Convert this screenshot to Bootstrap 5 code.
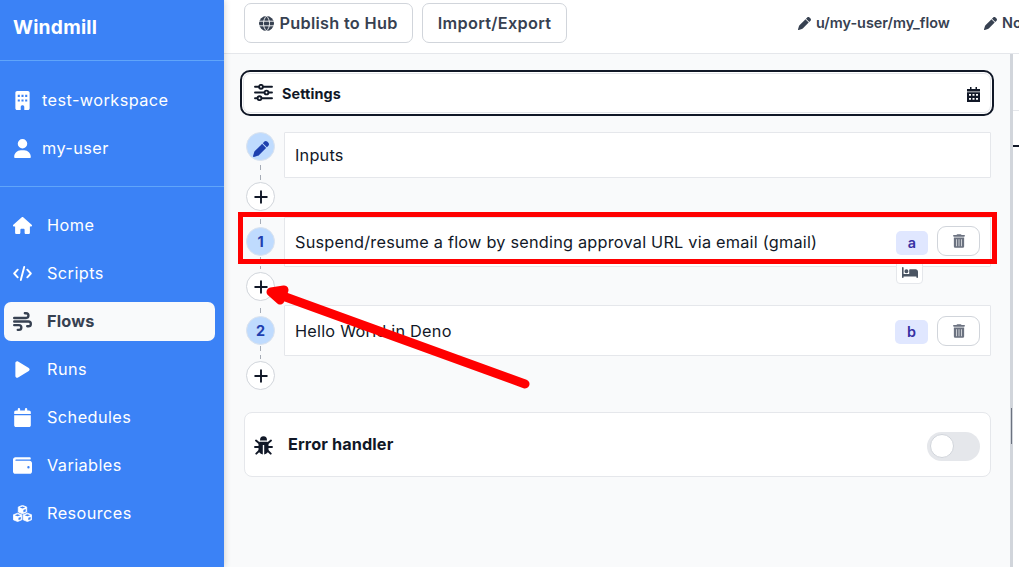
<!DOCTYPE html>
<html lang="en">
<head>
<meta charset="utf-8">
<meta name="viewport" content="width=device-width, initial-scale=1">
<title>Windmill</title>
<link href="https://cdn.jsdelivr.net/npm/bootstrap@5.3.0/dist/css/bootstrap.min.css" rel="stylesheet">
<style>
body{font-family:Inter,"Liberation Sans",sans-serif;font-optical-sizing:none;font-size:16.3px;letter-spacing:.22px;line-height:24px;color:#111827;background:#fff;height:567px;overflow:hidden}
svg{display:block;flex:none;fill:currentColor}
.side{width:224px;background:#3b82f6;color:#fff;letter-spacing:.42px;box-shadow:0 0 7px rgba(0,0,0,.2);z-index:2}
.brand{height:61px;padding:0 13px 7px;border-bottom:1px solid #60a5fa;font-size:19.2px;font-weight:700;letter-spacing:.25px}
.account{height:126px;padding:20px 13px 0;gap:9px;border-bottom:1px solid #60a5fa}
.account a{height:39px;gap:10px}
.menu{padding:19px 9px 0 4px;gap:9px}
.menu a{height:39px;padding-left:9px;gap:15px;border-radius:7px}
.side a>span:last-child{margin-bottom:1px}
.menu a.active{background:#f9fafb;color:#374151;font-weight:700;letter-spacing:.2px}
.side a{color:inherit;text-decoration:none}
.ico{width:19px}
.topbar{height:54px;border-bottom:1px solid #e5e7eb;background:#fff;padding:3px 0 0 20px}
.tool{height:40px;border:1px solid #d1d5db;border-radius:7px;background:#fff;color:#374151;font-weight:600;font-size:16.3px;letter-spacing:.3px;line-height:24px;padding:0;width:169px}
.tool+.tool{width:145px;margin-left:9px}
.path{font-size:14.4px;letter-spacing:0;font-weight:600;color:#374151;gap:5px;white-space:nowrap;padding-bottom:10px}
.editor{width:786px;background:#f9fafb;padding:16px 16px 0}
.ring{height:46px;border:2px solid #111827;border-radius:10px;padding:1px;background:#fff}
.ring>div{border:1px solid #e5e7eb;border-radius:7px;padding:0 10px 0 9px;font-size:14.4px;letter-spacing:.1px;font-weight:700}
.rail{width:29px}
.dot{width:29px;height:29px;border:1px solid #d1d5db;border-radius:50%;background:#fff;flex:none}
.dot.num{background:#bfdbfe;border-color:#dbe3ee;color:#1e40af;font-size:14.4px;letter-spacing:0;font-weight:700}
.rail line{stroke:#a6acb6;stroke-width:1}
.step{border:1px solid #e5e7eb;background:#fff;padding:0 10px;border-radius:1px}
.tagid{height:24px;border-radius:5px;background:#e0e7ff;color:#3730a3;font-size:14.4px;letter-spacing:0;font-weight:600}
.del{width:43px;height:30px;border:1px solid #d1d5db;border-radius:9px;background:#fff;color:#6b7280}
.bedtag{right:67px;top:41px;width:27px;height:25px;border:1px solid #e5e7eb;border-radius:4px;background:#fff;color:#4b5563}
.handler{height:65px;margin:22px 3px 0 4px;border:1px solid #e5e7eb;border-radius:8px;background:#fff;padding:0 10px 0 9px;font-weight:700}
.toggle{width:53px;height:29px;border-radius:15px;background:#e5e7eb;padding:2px 3px;margin-top:3px}
.toggle span{width:24px;height:24px;border-radius:50%;background:#fff;border:1px solid #d1d5db}
.split{width:3px;background:#d1d5db;padding:354px 1px 0}
.split div{width:1px;height:36px;background:#6b7280}
.mark-layer{left:0;top:0;z-index:5;pointer-events:none}
</style>
<script src="https://cdn.jsdelivr.net/npm/bootstrap@5.3.0/dist/js/bootstrap.bundle.min.js"></script>
</head>
<body class="d-flex position-relative">
<svg class="d-none">
<symbol id="pen" viewBox="0 0 512 512"><path d="M410 231l12-11-131-130-34 34L58.600 323c-10 10-18 23-22 37L1 481c-5 18 12 35 30 30l120-36c14-4 27-12 37-22zM314 68l130 130 49-49c25-25 25-65 0-90l-40-40c-25-25-65-25-90 0z"/></symbol>
<symbol id="bin" viewBox="0 0 448 512"><path fill-rule="evenodd" d="M135 18C141 7 152 0 164 0h120c12 0 23 7 29 18l7 14h96c18 0 32 14 32 32s-14 32-32 32H32C14 96 0 82 0 64s14-32 32-32h96zM32 128h384v320c0 35-29 64-64 64H96c-35 0-64-29-64-64zm88 64v256h24V192zm92 0v256h24V192zm92 0v256h24V192z"/></symbol>
<symbol id="plus" viewBox="0 0 14 14"><path d="M7 1.200V12.800M1.200 7H12.800" stroke="#111827" stroke-width="1.900" stroke-linecap="round"/></symbol>
</svg>
<nav class="side d-flex flex-column flex-shrink-0 position-relative">
  <div class="brand d-flex align-items-center">Windmill</div>
  <div class="account d-flex flex-column">
    <a href="#" class="d-flex align-items-center"><span class="ico d-flex justify-content-center"><svg width="15" height="19" viewBox="0 0 384 512"><path fill-rule="evenodd" d="M48 0C21 0 0 21 0 48v416c0 27 21 48 48 48h96v-80c0-64 96-64 96 0v80h96c27 0 48-21 48-48V48c0-27-21-48-48-48zM64 104h56v56H64zm100 0h56v56h-56zm100 0h56v56h-56zM64 228h56v56H64zm100 0h56v56h-56zm100 0h56v56h-56z"/></svg></span><span>test-workspace</span></a>
    <a href="#" class="d-flex align-items-center"><span class="ico d-flex justify-content-center"><svg width="17" height="19" viewBox="0 0 448 512"><path d="M224 256A128 128 0 1 0 224 0a128 128 0 1 0 0 256zm-46 48C80 304 0 384 0 482c0 17 13 30 30 30h388c17 0 30-13 30-30 0-98-80-178-178-178z"/></svg></span><span>my-user</span></a>
  </div>
  <div class="menu d-flex flex-column">
    <a href="#" class="d-flex align-items-center"><span class="ico"><svg width="19" height="17" viewBox="0 0 576 512"><path d="M576 255c0 18-15 33-32 33h-32v184c0 22-18 40-40 40h-80c-22 0-40-18-40-40v-88c0-18-14-32-32-32h-64c-18 0-32 14-32 32v88c0 22-18 40-40 40h-80c-22 0-40-18-40-40V288H32c-18 0-32-15-32-33 0-9 3-17 10-24L266 8c12-10 31-11 43-1l256 225c8 6 12 14 11 23z"/></svg></span><span>Home</span></a>
    <a href="#" class="d-flex align-items-center"><span class="ico"><svg width="19" height="15" viewBox="0 0 19 15"><path d="M4.700 3.700L1.200 7.500l3.500 3.800M14.300 3.700l3.500 3.800-3.500 3.800M11.200 1L7.800 14" fill="none" stroke="currentColor" stroke-width="1.900" stroke-linecap="round" stroke-linejoin="round"/></svg></span><span>Scripts</span></a>
    <a href="#" class="active d-flex align-items-center"><span class="ico"><svg width="19" height="19" viewBox="0 0 512 512"><path d="M288 32c0 18 14 32 32 32h32a32 32 0 0 1 0 64H32a32 32 0 0 0 0 64h320a96 96 0 0 0 0-192h-32c-18 0-32 14-32 32zm64 352c0 18 14 32 32 32h32a96 96 0 0 0 0-192H32a32 32 0 0 0 0 64h384a32 32 0 0 1 0 64h-32c-18 0-32 14-32 32zM128 512h32a96 96 0 0 0 0-192H32a32 32 0 0 0 0 64h128a32 32 0 0 1 0 64h-32a32 32 0 0 0 0 64z"/></svg></span><span>Flows</span></a>
    <a href="#" class="d-flex align-items-center"><span class="ico d-flex justify-content-center"><svg width="15" height="19" viewBox="0 0 384 512"><path d="M73 39C41 19 0 43 0 80v352c0 37 41 61 73 41l288-176c30-19 30-63 0-82z"/></svg></span><span>Runs</span></a>
    <a href="#" class="d-flex align-items-center"><span class="ico d-flex justify-content-center"><svg width="17" height="19" viewBox="0 0 448 512"><path d="M96 32v32H48C21 64 0 85 0 112v48h448v-48c0-27-21-48-48-48h-48V32a32 32 0 0 0-64 0v32H160V32a32 32 0 0 0-64 0zm352 160H0v272c0 27 21 48 48 48h352c27 0 48-21 48-48z"/></svg></span><span>Schedules</span></a>
    <a href="#" class="d-flex align-items-center"><span class="ico"><svg width="19" height="19" viewBox="0 0 512 512"><path fill-rule="evenodd" d="M64 32C29 32 0 61 0 96v320c0 35 29 64 64 64h384c35 0 64-29 64-64V192c0-35-29-64-64-64H80a16 16 0 0 1 0-32h368a32 32 0 0 0 0-64zM416 272a32 32 0 1 1 0 64 32 32 0 1 1 0-64z"/></svg></span><span>Variables</span></a>
    <a href="#" class="d-flex align-items-center"><span class="ico"><svg width="19" height="17" viewBox="0 0 19 17"><g id="cube"><path d="M9.500.4L13.700 2v5L9.500 8.700 5.300 7V2z" stroke="currentColor" stroke-width=".8" stroke-linejoin="round"/><path d="M6.700 2.500l2.800 1 2.800-1-2.800-1zM10.400 5v2.300l2.300-.9V4.100z" fill="#3b82f6"/></g><use href="#cube" x="-4.900" y="7.800"/><use href="#cube" x="4.900" y="7.800"/></svg></span><span>Resources</span></a>
  </div>
</nav>
<main class="d-flex flex-column flex-shrink-0" style="width:795px">
  <header class="topbar d-flex align-items-start overflow-hidden">
    <button class="tool d-flex align-items-center justify-content-center flex-shrink-0"><svg width="15" height="15" viewBox="0 0 15 15" style="margin-right:5px"><circle cx="7.500" cy="7.500" r="7.500"/><path d="M0 5.200h15M0 9.800h15M7.500 0C3.500 4 3.500 11 7.500 15M7.500 0c4 4 4 11 0 15" stroke="#fff" stroke-width=".9" fill="none"/></svg><span>Publish to Hub</span></button>
    <button class="tool flex-shrink-0">Import/Export</button>
    <div class="path d-flex align-items-center h-100" style="margin-left:231px"><svg width="13" height="13"><use href="#pen"/></svg><span style="width:163px">u/my-user/my_flow</span><svg width="13" height="13"><use href="#pen"/></svg><span>No</span></div>
  </header>
  <div class="d-flex flex-grow-1">
    <section class="editor">
      <div class="ring d-flex"><div class="d-flex align-items-center w-100"><svg width="19" height="17" viewBox="0 0 19 17" style="margin:0 9px 1px 1px"><g fill="none" stroke="currentColor" stroke-width="1.900" stroke-linecap="round"><path d="M1 2.800h3.500M9.500 2.800H18M1 8.500h9M15 8.500h3M1 14.200h2M8 14.200h10"/><circle cx="7" cy="2.800" r="1.900"/><circle cx="12.500" cy="8.500" r="1.900"/><circle cx="5.500" cy="14.200" r="1.900"/></g></svg><span style="margin-top:1px">Settings</span><svg class="ms-auto" width="13" height="15" viewBox="0 0 13 15" style="margin-top:2px"><path fill-rule="evenodd" d="M3 0h1.500v2h4V0H10v2h3v2.500H0V2h3zM0 5.200h13V15H0zM2 7v1.700h2V7zm3.500 0v1.700h2V7zM9 7v1.700h2V7zM2 11v1.700h2V11zm3.500 0v1.700h2V11zM9 11v1.700h2V11z"/></svg></div></div>
      <div class="d-flex mt-3 ms-1 ps-1">
        <div class="rail d-flex flex-column align-items-center" style="margin-left:-2px">
          <div class="dot num d-flex align-items-center justify-content-center"><svg width="16" height="16" style="margin-top:4px"><use href="#pen"/></svg></div>
          <svg width="1" height="21"><line x1=".5" x2=".5" y1="4" y2="9"/><line x1=".5" x2=".5" y1="14" y2="19"/></svg>
          <div class="dot d-flex align-items-center justify-content-center"><svg width="14" height="14"><use href="#plus"/></svg></div>
          <svg width="1" height="16"><line x1=".5" x2=".5" y1="8" y2="13"/></svg>
          <div class="dot num d-flex align-items-center justify-content-center">1</div>
          <svg width="1" height="16"><line x1=".5" x2=".5" y1="1" y2="5"/><line x1=".5" x2=".5" y1="10" y2="13"/></svg>
          <div class="dot d-flex align-items-center justify-content-center"><svg width="14" height="14"><use href="#plus"/></svg></div>
          <svg width="1" height="15"><line x1=".5" x2=".5" y1="7" y2="12"/></svg>
          <div class="dot num d-flex align-items-center justify-content-center">2</div>
          <svg width="1" height="16"><line x1=".5" x2=".5" y1="1" y2="6"/><line x1=".5" x2=".5" y1="10" y2="14"/></svg>
          <div class="dot d-flex align-items-center justify-content-center"><svg width="14" height="14"><use href="#plus"/></svg></div>
        </div>
        <div class="flex-grow-1 d-flex flex-column" style="margin:0 3px 0 9px">
          <div class="step d-flex align-items-center" style="height:46px">Inputs</div>
          <div class="step d-flex align-items-center position-relative" style="height:50px;margin-top:39px"><span>Suspend/resume a flow by sending approval URL via email (gmail)</span>
            <span class="tagid d-flex align-items-center justify-content-center ms-auto" style="width:32px;margin-top:2px">a</span><button class="del d-flex align-items-center justify-content-center" style="margin-left:9px;margin-bottom:2px"><svg width="12" height="14"><use href="#bin"/></svg></button>
            <span class="bedtag position-absolute d-flex align-items-center justify-content-center"><svg width="16" height="13" viewBox="0 32 640 448" style="margin-top:2px"><path d="M32 32c18 0 32 14 32 32v256h224V160c0-18 14-32 32-32h224c53 0 96 43 96 96v224a32 32 0 0 1-64 0v-32H64v32a32 32 0 0 1-64 0V64c0-18 14-32 32-32zm144 96a80 80 0 1 1 0 160 80 80 0 1 1 0-160z"/></svg></span></div>
          <div class="step d-flex align-items-center" style="height:51px;margin-top:38px">Hello World in Deno
            <span class="tagid d-flex align-items-center justify-content-center ms-auto" style="width:33px;margin-top:2px">b</span><button class="del d-flex align-items-center justify-content-center" style="margin-left:9px"><svg width="12" height="14"><use href="#bin"/></svg></button></div>
        </div>
      </div>
      <div class="handler d-flex align-items-center"><svg width="19" height="19" viewBox="0 0 19 19" style="margin:2px 15px 0 0"><path d="M6 4.500a3.500 4.200 0 0 1 7 0zM5.500 5.800h8l1 2v6c0 2.500-1.500 4-4.300 4.700V9H8.800v9.500C6 17.800 4.500 16.300 4.500 13.800v-6z"/><path d="M5.500 7.500L2 4.500M13.500 7.500L17 4.500M5 11H1M14 11h4M5.500 14.500L2.300 17.700M13.500 14.500l3.200 3.200" stroke="currentColor" stroke-width="1.900" stroke-linecap="round"/></svg><span style="letter-spacing:.1px;margin-bottom:1px">Error handler</span><div class="toggle ms-auto"><span class="d-block"></span></div></div>
    </section>
    <div class="split"><div></div></div>
    <aside class="flex-grow-1 bg-white"><div style="height:57px;border-bottom:1px solid #e5e7eb"></div><div style="height:36px;border-bottom:2px solid #111827"></div></aside>
  </div>
</main>
<svg class="mark-layer position-absolute" width="1019" height="567"><rect x="240.500" y="214.500" width="754" height="47" fill="none" stroke="red" stroke-width="5"/><path d="M280 295L525 384" stroke="red" stroke-width="9" stroke-linecap="round"/><path d="M271 292L284 290 280 300z" fill="red" stroke="red" stroke-width="9" stroke-linejoin="round"/></svg>
</body>
</html>
